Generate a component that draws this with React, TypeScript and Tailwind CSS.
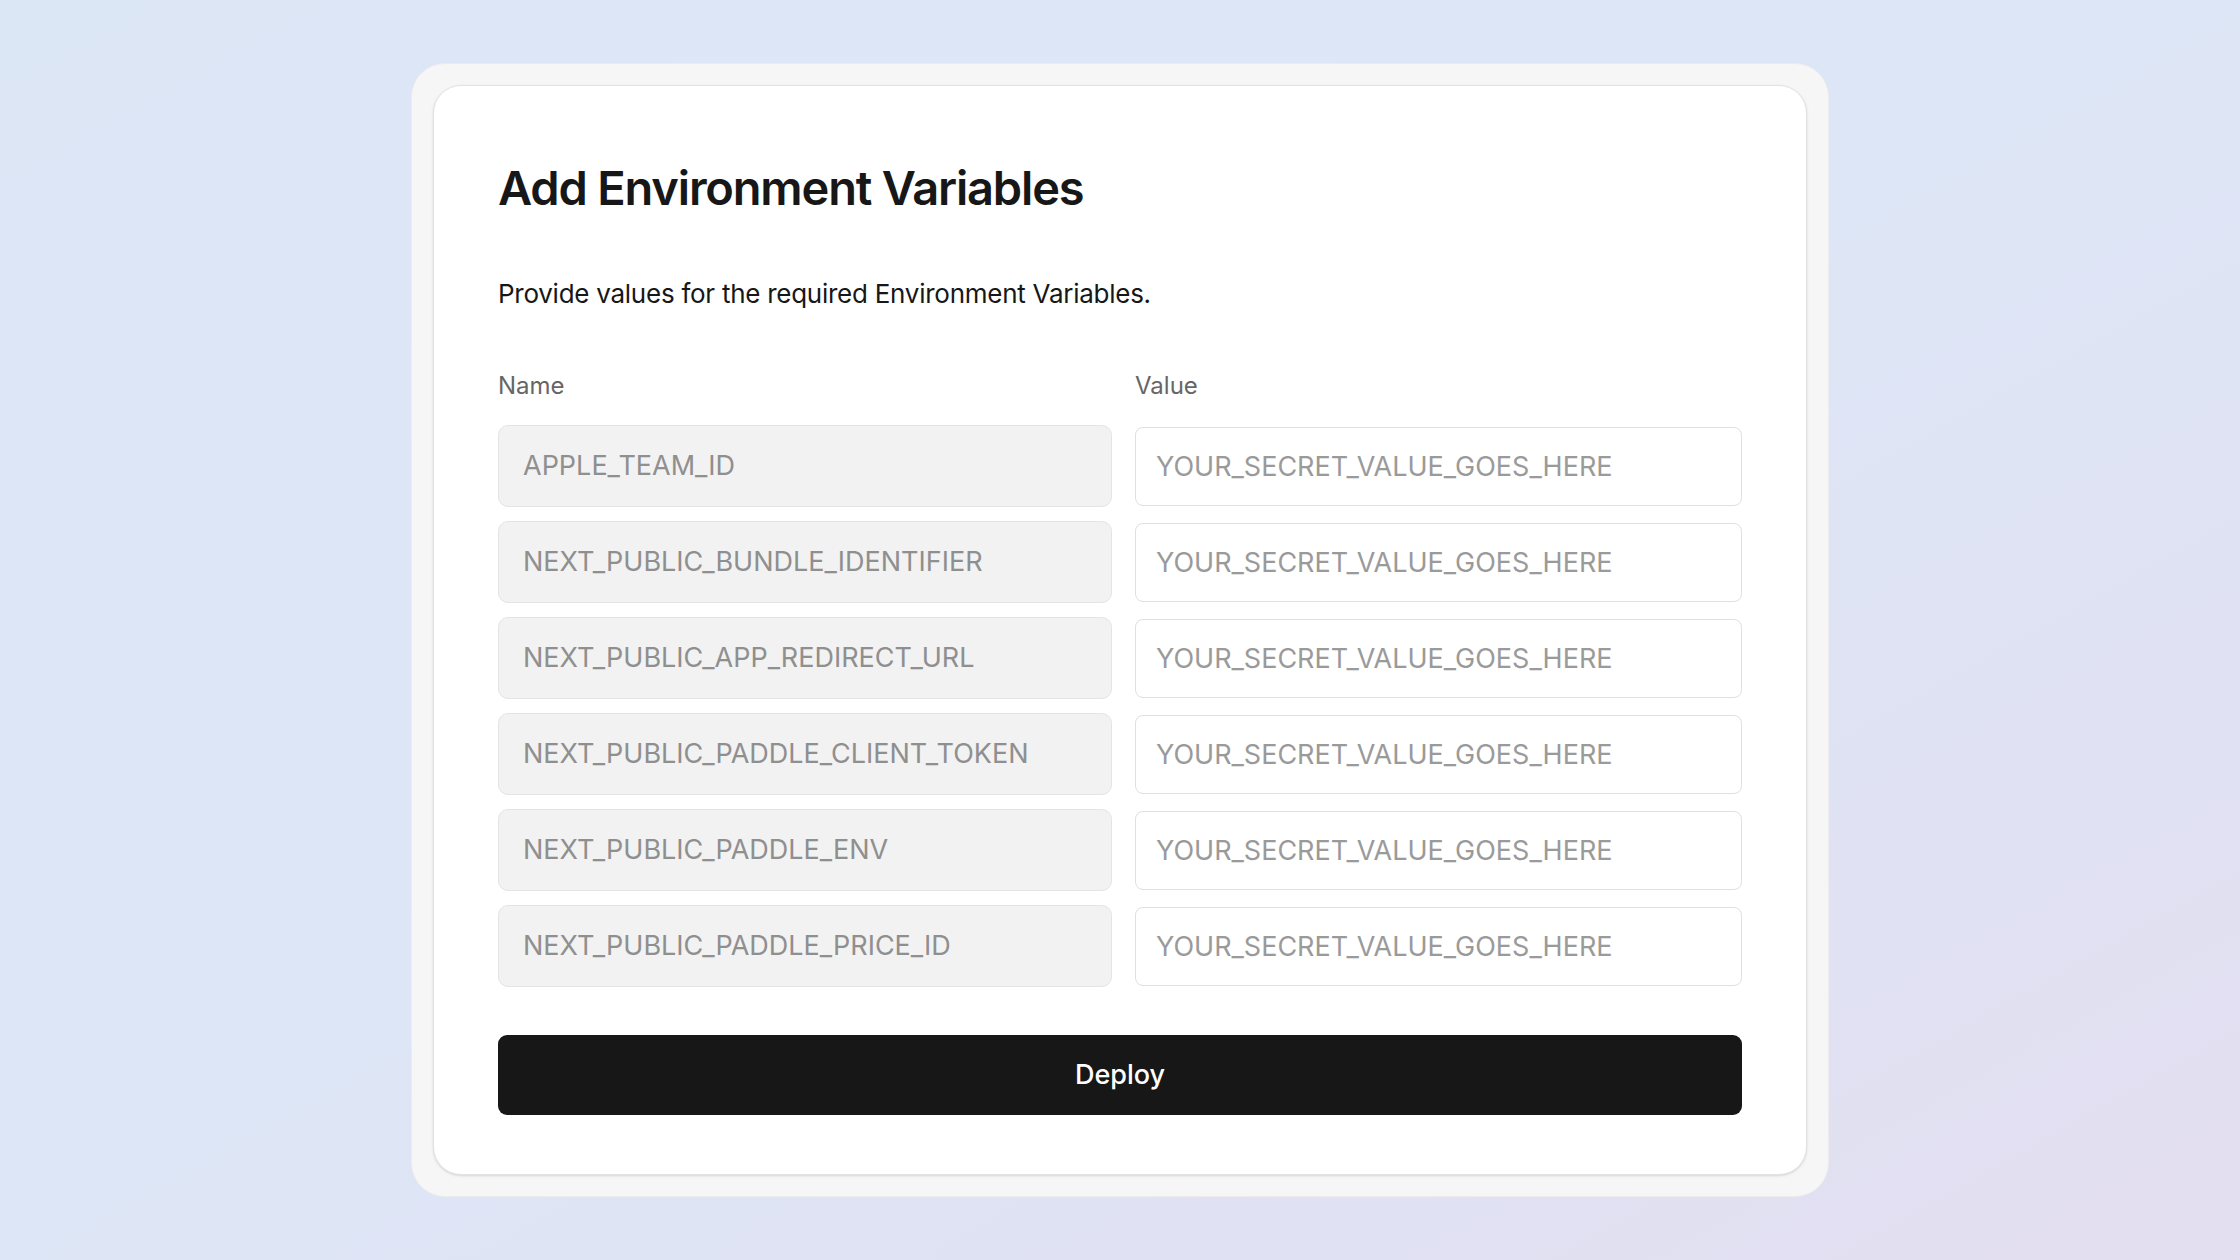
import React from 'react';

const names = [
  'APPLE_TEAM_ID',
  'NEXT_PUBLIC_BUNDLE_IDENTIFIER',
  'NEXT_PUBLIC_APP_REDIRECT_URL',
  'NEXT_PUBLIC_PADDLE_CLIENT_TOKEN',
  'NEXT_PUBLIC_PADDLE_ENV',
  'NEXT_PUBLIC_PADDLE_PRICE_ID',
];

export default function App() {
  return (
    <div
      className="h-[1260px] w-full flex items-center justify-center bg-gradient-to-br from-[#dce7f6] via-[#dde6f6] to-[#e3def0]"
      style={{ fontFamily: 'Inter, "Noto Sans", sans-serif' }}
    >
      <div className="w-[1418px] h-[1134px] rounded-[34px] bg-[#f6f6f7] border border-[#ececee] p-[21px]">
        <div className="h-full rounded-[28px] bg-white border border-[#e2e2e4] shadow-sm px-[64px] pt-[73px]">
          <h1 className="text-[47px] leading-[58px] font-semibold tracking-tight text-[#171717]">
            Add Environment Variables
          </h1>
          <p className="mt-[59px] text-[26px] leading-[36px] text-[#171717] tracking-[-0.01em]">
            Provide values for the required Environment Variables.
          </p>
          <div className="mt-[58px] grid grid-cols-[614px_1fr] gap-x-[23px]">
            <div className="text-[24px] leading-[32px] text-[#666]">Name</div>
            <div className="text-[24px] leading-[32px] text-[#666]">Value</div>
          </div>
          <div className="mt-[23px] flex flex-col gap-[14px]">
            {names.map(n => (
              <div key={n} className="grid grid-cols-[614px_1fr] gap-x-[23px] items-center">
                <div className="h-[82px] flex items-center px-[24px] rounded-[10px] bg-[#f2f2f2] border border-[#e4e4e4] text-[27px] text-[#8f8f8f]">
                  {n}
                </div>
                <input
                  placeholder="YOUR_SECRET_VALUE_GOES_HERE"
                  className="h-[79px] px-[20px] rounded-[8px] bg-white border border-[#e0e0e0] text-[27px] placeholder:text-[#9a9a9a] outline-none"
                />
              </div>
            ))}
          </div>
          <button className="mt-[48px] w-full h-[80px] rounded-[9px] bg-[#171717] text-white text-[27px] font-medium">
            Deploy
          </button>
        </div>
      </div>
    </div>
  );
}
